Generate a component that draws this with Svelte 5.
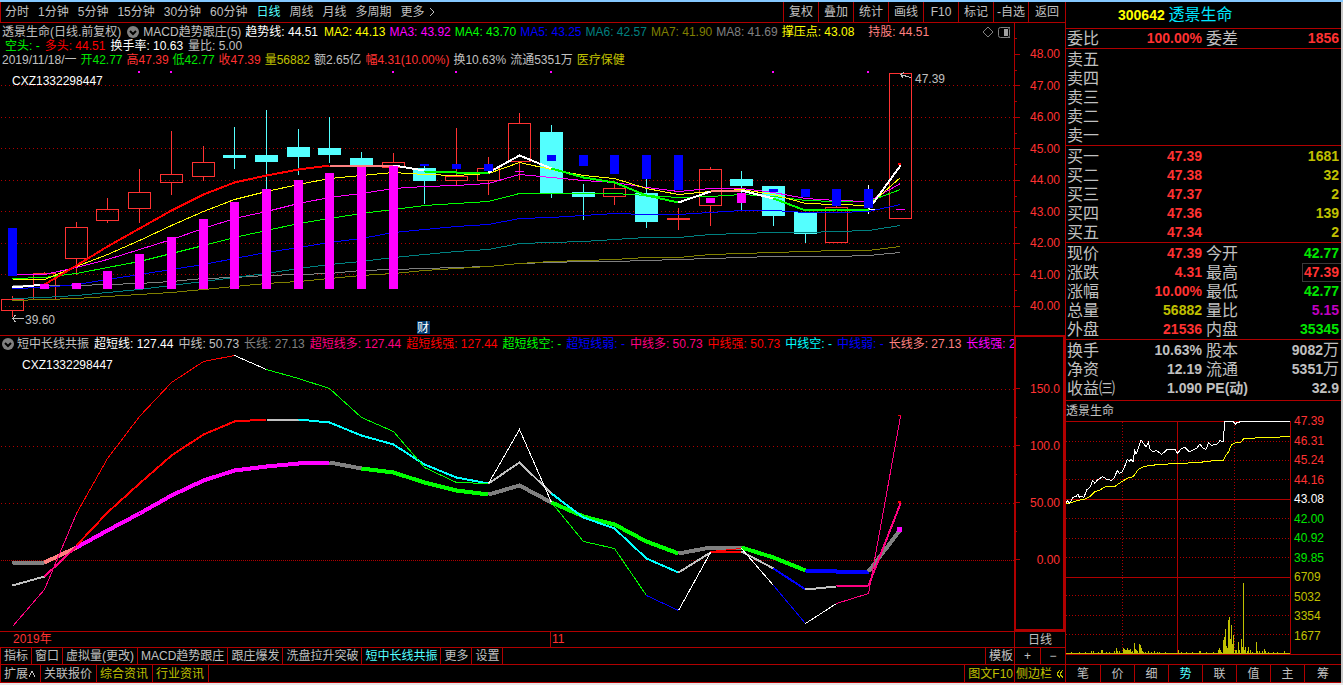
<script lang="ts">
  type Segment = { color: string; from: number; ys: number[] };
  type Cell = { label: string; value: string; tone: string; unit?: string; boxed?: boolean; latin?: boolean };

  const periods = ["分时", "1分钟", "5分钟", "15分钟", "30分钟", "60分钟", "日线", "周线", "月线", "多周期"];
  const tools = ["复权", "叠加", "统计", "画线", "F10", "标记", "-自选", "返回"];

  const averages = [
    { name: "MA2", value: "44.13", color: "#ffff00" },
    { name: "MA3", value: "43.92", color: "#ff00ff" },
    { name: "MA4", value: "43.70", color: "#00ff00" },
    { name: "MA5", value: "43.25", color: "#0000ff" },
    { name: "MA6", value: "42.57", color: "#008080" },
    { name: "MA7", value: "41.90", color: "#808000" },
    { name: "MA8", value: "41.69", color: "#808080" },
    { name: "撑压点", value: "43.08", color: "#ffff00" },
  ];

  const signals = [
    { text: "空头: -", color: "#00ff00" },
    { text: "多头: 44.51", color: "#ff0000" },
    { text: "换手率: 10.63", color: "#ffffff" },
    { text: "量比: 5.00", color: "#c0c0c0" },
  ];

  const dayQuote = [
    { text: "2019/11/18/一", color: "#c0c0c0" },
    { text: "开42.77", color: "#00e600" },
    { text: "高47.39", color: "#ff3232" },
    { text: "低42.77", color: "#00e600" },
    { text: "收47.39", color: "#ff3232" },
    { text: "量56882", color: "#c0c000" },
    { text: "额2.65亿", color: "#c0c0c0" },
    { text: "幅4.31(10.00%)", color: "#ff3232" },
    { text: "换10.63%", color: "#c0c0c0" },
    { text: "流通5351万", color: "#c0c0c0" },
    { text: "医疗保健", color: "#c0c000" },
  ];

  const resonance = [
    { text: "超短线: 127.44", color: "#ffffff" },
    { text: "中线: 50.73", color: "#c0c0c0" },
    { text: "长线: 27.13", color: "#808080" },
    { text: "超短线多: 127.44", color: "#ff0080" },
    { text: "超短线强: 127.44", color: "#ff0000" },
    { text: "超短线空: -", color: "#00ff00" },
    { text: "超短线弱: -", color: "#0000ff" },
    { text: "中线多: 50.73", color: "#ff0080" },
    { text: "中线强: 50.73", color: "#ff0000" },
    { text: "中线空: -", color: "#00ffff" },
    { text: "中线弱: -", color: "#0000ff" },
    { text: "长线多: 27.13", color: "#ff8080" },
    { text: "长线强: 27.13", color: "#ff00ff" },
  ];

  const priceLabels = ["48.00", "47.00", "46.00", "45.00", "44.00", "43.00", "42.00", "41.00", "40.00"];
  const priceGrid = [85, 117, 148, 180, 211, 243, 274, 306];
  const majorTicks = [54, ...priceGrid];
  const minorTicks = [38, 70, 101, 133, 164, 196, 227, 259, 290];

  const oscLabels = ["150.0", "100.0", "50.00", "0.00"];
  const oscGrid = [389, 446, 503];

  // bar index -> pixel column
  const x = (i: number) => Math.floor(12.88 + 31.69 * i);
  const line = (ys: number[], from = 0) => ys.map((y, k) => `${x(from + k) + 0.5},${y + 0.5}`).join(" ");

  // up/down, body top, body bottom, high, low
  const candles: [string, number, number, number, number][] = [
    ["up", 299, 310, 296, 317],
    ["up", 273, 299, 272, 299],
    ["up", 227, 258, 222, 275],
    ["up", 209, 220, 198, 223],
    ["up", 192, 208, 169, 223],
    ["up", 174, 182, 131, 195],
    ["up", 162, 176, 146, 181],
    ["down", 155, 158, 127, 169],
    ["down", 155, 162, 110, 190],
    ["down", 147, 157, 129, 175],
    ["down", 148, 155, 117, 163],
    ["down", 158, 165, 152, 165],
    ["up", 162, 167, 153, 167],
    ["down", 168, 181, 165, 204],
    ["up", 176, 180, 128, 185],
    ["up", 168, 180, 157, 195],
    ["up", 123, 161, 113, 180],
    ["down", 132, 193, 125, 198],
    ["down", 192, 197, 184, 220],
    ["up", 188, 196, 182, 205],
    ["down", 193, 222, 178, 228],
    ["up", 218, 219, 208, 230],
    ["up", 169, 205, 167, 226],
    ["down", 179, 186, 171, 211],
    ["down", 186, 216, 186, 226],
    ["down", 212, 234, 212, 243],
    ["up", 207, 242, 206, 242],
    ["flat", 209, 210, 185, 214],
    ["up", 73, 218, 73, 218],
  ];

  // index, top, bottom, color
  const bars: [number, number, number, string][] = [
    [0, 228, 276, "#0000ff"],
    [1, 284, 289, "#ff00ff"],
    [2, 283, 289, "#ff00ff"],
    [3, 271, 289, "#ff00ff"],
    [4, 254, 289, "#ff00ff"],
    [5, 237, 289, "#ff00ff"],
    [6, 219, 289, "#ff00ff"],
    [7, 202, 289, "#ff00ff"],
    [8, 189, 289, "#ff00ff"],
    [9, 180, 289, "#ff00ff"],
    [10, 173, 289, "#ff00ff"],
    [11, 167, 289, "#ff00ff"],
    [12, 166, 289, "#ff00ff"],
    [13, 164, 166, "#0000ff"],
    [14, 164, 169, "#0000ff"],
    [15, 164, 171, "#0000ff"],
    [16, 171, 172, "#ff00ff"],
    [17, 155, 161, "#0000ff"],
    [18, 155, 166, "#0000ff"],
    [19, 155, 174, "#0000ff"],
    [20, 155, 179, "#0000ff"],
    [21, 155, 190, "#0000ff"],
    [22, 198, 203, "#ff00ff"],
    [23, 193, 203, "#ff00ff"],
    [24, 189, 192, "#0000ff"],
    [25, 189, 197, "#0000ff"],
    [26, 189, 206, "#0000ff"],
    [27, 189, 208, "#0000ff"],
    [28, 209, 210, "#ff00ff"],
  ];

  const maLines: Segment[] = [
    { color: "#808080", from: 0, ys: [285, 285, 285, 284, 283, 281, 278, 277, 275, 274, 273, 270, 269, 268, 267, 266, 263, 262, 261, 261, 260, 259, 258, 257, 256, 256, 256, 255, 252] },
    { color: "#808000", from: 0, ys: [300, 299, 298, 296, 294, 292, 289, 286, 283, 281, 278, 275, 273, 270, 268, 266, 263, 261, 260, 259, 257, 257, 254, 253, 252, 251, 250, 250, 246] },
    { color: "#008080", from: 0, ys: [298, 297, 295, 292, 289, 285, 281, 277, 273, 268, 264, 261, 257, 254, 251, 249, 243, 242, 241, 239, 237, 237, 234, 233, 232, 232, 231, 230, 225] },
    { color: "#0000ff", from: 0, ys: [288, 287, 284, 279, 274, 269, 264, 258, 252, 247, 242, 238, 232, 229, 226, 224, 218, 217, 215, 213, 214, 214, 212, 210, 210, 212, 212, 211, 204] },
    { color: "#00ff00", from: 0, ys: [278, 277, 273, 267, 261, 253, 245, 237, 230, 223, 218, 213, 209, 205, 203, 201, 193, 193, 193, 193, 195, 197, 196, 194, 196, 200, 201, 201, 189] },
    { color: "#ff00ff", from: 0, ys: [274, 274, 267, 259, 249, 239, 228, 218, 211, 203, 197, 193, 188, 186, 185, 183, 174, 177, 180, 182, 187, 191, 188, 188, 192, 198, 200, 201, 183] },
    { color: "#ffff00", from: 0, ys: [279, 279, 266, 254, 240, 225, 211, 199, 191, 184, 178, 175, 172, 174, 175, 173, 162, 169, 175, 178, 188, 194, 191, 189, 194, 203, 204, 205, 177] },
  ];

  const trend: Segment[] = [
    { color: "#ffffff", from: 0, ys: [287, 284] },
    { color: "#ff0000", from: 1, ys: [284, 265, 246, 228, 210, 194, 182, 175, 169, 165] },
    { color: "#ff8080", from: 10, ys: [165, 165, 165] },
    { color: "#ffffff", from: 12, ys: [165, 170] },
    { color: "#00ff00", from: 13, ys: [171, 172, 172] },
    { color: "#ffffff", from: 15, ys: [172, 155, 168] },
    { color: "#00ff00", from: 17, ys: [168, 177, 182, 195, 202] },
    { color: "#ffffff", from: 21, ys: [202, 191] },
    { color: "#ff8080", from: 22, ys: [190, 190] },
    { color: "#ffffff", from: 23, ys: [190, 198] },
    { color: "#00ff00", from: 24, ys: [198, 210, 209, 209] },
    { color: "#ffffff", from: 27, ys: [209, 165] },
  ];

  const alertDots = [4, 5, 12, 14, 17, 24, 27];

  const longLine: Segment[] = [
    { color: "#808080", from: 0, ys: [563, 562] },
    { color: "#ff8080", from: 1, ys: [562, 547] },
    { color: "#ff00ff", from: 2, ys: [547, 530, 513, 495, 480, 470, 466, 463, 462] },
    { color: "#808080", from: 10, ys: [462, 468] },
    { color: "#00ff00", from: 11, ys: [468, 472, 482, 490, 494] },
    { color: "#808080", from: 15, ys: [494, 485, 502] },
    { color: "#00ff00", from: 17, ys: [502, 516, 524, 541, 553] },
    { color: "#808080", from: 21, ys: [553, 547, 547] },
    { color: "#00ff00", from: 23, ys: [547, 557, 570] },
    { color: "#0000ff", from: 25, ys: [570, 571, 571] },
    { color: "#808080", from: 27, ys: [571, 529] },
  ];

  const midLine: Segment[] = [
    { color: "#c0c0c0", from: 0, ys: [585, 576] },
    { color: "#ff0080", from: 1, ys: [576, 546] },
    { color: "#ff0000", from: 2, ys: [545, 512, 483, 455, 434, 421, 419] },
    { color: "#c0c0c0", from: 8, ys: [419, 419] },
    { color: "#00ffff", from: 9, ys: [419, 422, 435, 444, 464, 477, 483] },
    { color: "#c0c0c0", from: 15, ys: [483, 462, 493] },
    { color: "#00ffff", from: 17, ys: [493, 517, 528, 558, 572] },
    { color: "#c0c0c0", from: 21, ys: [572, 552] },
    { color: "#ff0000", from: 22, ys: [552, 551] },
    { color: "#c0c0c0", from: 23, ys: [551, 568] },
    { color: "#0000ff", from: 24, ys: [568, 589] },
    { color: "#c0c0c0", from: 25, ys: [589, 586] },
    { color: "#ff0080", from: 26, ys: [586, 585, 503] },
  ];

  const shortLine: Segment[] = [
    { color: "#ff0080", from: 0, ys: [626, 589, 513] },
    { color: "#ff0000", from: 2, ys: [513, 458, 416, 382, 361, 355] },
    { color: "#ffffff", from: 7, ys: [355, 369] },
    { color: "#00ff00", from: 8, ys: [369, 378, 388, 417, 431, 467, 482, 483] },
    { color: "#ffffff", from: 15, ys: [483, 429, 502] },
    { color: "#00ff00", from: 17, ys: [502, 541, 548, 595] },
    { color: "#0000ff", from: 20, ys: [595, 610] },
    { color: "#ffffff", from: 21, ys: [610, 552] },
    { color: "#ff0000", from: 22, ys: [551, 548] },
    { color: "#ffffff", from: 23, ys: [548, 585] },
    { color: "#0000ff", from: 24, ys: [585, 623] },
    { color: "#ffffff", from: 25, ys: [623, 603] },
    { color: "#ff0080", from: 26, ys: [603, 593, 416] },
  ];

  const indicatorTabs = ["指标", "窗口", "虚拟量(更改)", "MACD趋势跟庄", "跟庄爆发", "洗盘拉升突破", "短中长线共振", "更多", "设置"];
  const infoTabs = [
    { text: "关联报价", accent: false },
    { text: "综合资讯", accent: true },
    { text: "行业资讯", accent: true },
  ];

  const asks = ["卖五", "卖四", "卖三", "卖二", "卖一"];
  const bids = [
    { label: "买一", price: "47.39", volume: "1681" },
    { label: "买二", price: "47.38", volume: "32" },
    { label: "买三", price: "47.37", volume: "2" },
    { label: "买四", price: "47.36", volume: "139" },
    { label: "买五", price: "47.34", volume: "2" },
  ];

  const ratio: [Cell, Cell][] = [
    [{ label: "委比", value: "100.00%", tone: "up" }, { label: "委差", value: "1856", tone: "up" }],
  ];
  const stats: [Cell, Cell][] = [
    [{ label: "现价", value: "47.39", tone: "up" }, { label: "今开", value: "42.77", tone: "down" }],
    [{ label: "涨跌", value: "4.31", tone: "up" }, { label: "最高", value: "47.39", tone: "up", boxed: true }],
    [{ label: "涨幅", value: "10.00%", tone: "up" }, { label: "最低", value: "42.77", tone: "down" }],
    [{ label: "总量", value: "56882", tone: "volume" }, { label: "量比", value: "5.15", tone: "ratio" }],
    [{ label: "外盘", value: "21536", tone: "up" }, { label: "内盘", value: "35345", tone: "down" }],
  ];
  const fundamentals: [Cell, Cell][] = [
    [{ label: "换手", value: "10.63%", tone: "plain" }, { label: "股本", value: "9082", unit: "万", tone: "plain" }],
    [{ label: "净资", value: "12.19", tone: "plain" }, { label: "流通", value: "5351", unit: "万", tone: "plain" }],
    [{ label: "收益㈢", value: "1.090", tone: "plain" }, { label: "PE(动)", value: "32.9", tone: "plain", latin: true }],
  ];

  const miniLabels = [
    { text: "47.39", tone: "up" },
    { text: "46.31", tone: "up" },
    { text: "45.24", tone: "up" },
    { text: "44.16", tone: "up" },
    { text: "43.08", tone: "base" },
    { text: "42.00", tone: "down" },
    { text: "40.92", tone: "down" },
    { text: "39.85", tone: "down" },
    { text: "6709", tone: "volume" },
    { text: "5032", tone: "volume" },
    { text: "3354", tone: "volume" },
    { text: "1677", tone: "volume" },
  ];
  const miniDotted = [124, 181, 238, 355, 415, 472, 586, 646, 703];
  const miniPrice =
    "18,310 22,302 28,309 33,303 38,292 48,290 54,282 58,292 63,288 72,292 80,270 90,262 98,242 105,250 112,240 128,230 140,238 155,241 163,232 172,212 178,220 186,216 192,205 202,178 208,185 212,178 220,185 224,148 228,163 234,148 243,119 250,130 258,140 265,128 270,148 278,155 290,152 305,163 320,150 345,148 352,160 365,145 375,143 388,155 400,150 410,145 420,132 427,143 438,148 446,128 455,136 472,132 480,122 490,125 494,65 520,65 526,73 532,67 537,68 540,65 690,65";
  const miniAverage =
    "18,310 35,308 50,302 75,297 90,290 105,275 120,270 138,259 165,259 185,245 205,233 220,230 235,208 250,200 270,196 325,192 350,190 420,188 435,184 490,181 498,165 506,155 514,135 525,129 542,127 552,115 585,114 605,111 660,111 690,109";
  const miniVolume: [number, number][] = [
    [33, 756], [57, 756], [75, 756], [93, 752], [99, 754], [114, 755], [123, 751], [126, 749], [138, 755], [147, 755],
    [162, 752], [168, 744], [171, 752], [177, 752], [189, 744], [192, 747], [195, 750], [198, 750], [201, 744], [204, 751],
    [207, 750], [210, 747], [213, 755], [216, 753], [222, 729], [225, 747], [228, 750], [231, 752], [237, 732], [240, 736],
    [243, 745], [246, 753], [249, 755], [255, 756], [264, 753], [273, 755], [282, 753], [291, 755], [297, 756], [315, 756],
    [354, 749], [363, 756], [378, 756], [396, 756], [417, 752], [420, 754], [438, 756], [459, 757], [474, 749], [477, 744],
    [480, 750], [483, 755], [489, 720], [492, 710], [495, 687], [498, 738], [501, 743], [504, 660], [507, 651], [510, 716],
    [513, 675], [516, 733], [519, 705], [525, 750], [528, 751], [534, 726], [537, 750], [543, 717], [546, 740], [549, 548],
    [552, 750], [555, 742], [561, 752], [564, 741], [570, 750], [576, 756], [588, 726], [591, 752], [597, 753], [606, 754],
    [612, 747], [615, 753], [624, 755], [639, 757], [651, 757], [672, 753],
  ];

  const sideTabs = ["笔", "价", "细", "势", "联", "值", "主", "筹"];

  let period = "日线";
  let indicator = "短中长线共振";
  let sideTab = "势";
</script>

<div class="terminal">
  <div class="workspace">
    <main class="charts">
      <header class="toolbar">
        <nav class="periods" aria-label="周期">
          {#each periods as name}
            <button class:active={period === name} on:click={() => (period = name)}>{name}</button>
          {/each}
          <button class="more">更多
            <svg width="6" height="10" aria-hidden="true"><path d="M1 1 L5 5 L1 9" fill="none" stroke="currentColor" /></svg>
          </button>
        </nav>
        <div class="tools">
          {#each tools as tool}
            <button>{tool}</button>
          {/each}
        </div>
      </header>

      <section class="pane pane-main">
        <div class="plot">
          <div class="readout">
            <div class="readout-row title-row">
              <span class="silver">透景生命(日线.前复权)</span>
              <svg class="toggle" width="12" height="12" aria-hidden="true">
                <circle cx="6" cy="6" r="6" fill="#808080" />
                <path d="M3 5 L6 8 L9 5" fill="none" stroke="#000" stroke-width="2" />
              </svg>
              <span class="silver macd">MACD趋势跟庄(5)</span>
              <span class="white">趋势线: 44.51</span>
              <div class="averages">
                {#each averages as ma}
                  <span style="color: {ma.color}">{ma.name}: {ma.value}</span>
                {/each}
              </div>
              <span class="hold">持股: 44.51</span>
              <svg class="pane-icons" width="28" height="14" aria-hidden="true">
                <path d="M6 2 L11 7 L6 12 L1 7 Z" fill="none" stroke="#808080" />
                <rect x="19.5" y="2.5" width="11" height="10" rx="1" fill="none" stroke="#808080" />
                <rect x="16.5" y="2.5" width="11" height="10" rx="2" fill="#000" stroke="#808080" />
                <rect x="22" y="4" width="4" height="7" fill="#a0a0a0" />
              </svg>
            </div>
            <div class="readout-row signals">
              {#each signals as s}
                <span style="color: {s.color}">{s.text}</span>
              {/each}
            </div>
            <div class="readout-row day">
              {#each dayQuote as q}
                <span style="color: {q.color}">{q.text}</span>
              {/each}
            </div>
          </div>

          <svg class="canvas" width="100%" height="268" role="img" aria-label="日线K线图">
            <g transform="translate(0 -67)">
              {#each priceGrid as y}
                <line class="grid" x1="1" x2="100%" y1={y + 0.5} y2={y + 0.5} />
              {/each}

              {#each alertDots as i}
                <rect x={x(i) - 1} y="71" width="2" height="2" fill="#ff00ff" />
              {/each}

              {#each candles as [kind, top, bottom, high, low], i}
                {#if kind === "up"}
                  <rect x={x(i)} y={high} width="1" height={top - high} fill="#ff3232" />
                  <rect x={x(i)} y={bottom} width="1" height={low - bottom} fill="#ff3232" />
                  <rect x={x(i) - 10.5} y={top + 0.5} width="22" height={bottom - top} fill="none" stroke="#ff3232" />
                {:else}
                  <rect x={x(i)} y={high} width="1" height={low - high} fill={kind === "down" ? "#54ffff" : "#ffffff"} />
                  <rect x={x(i) - 11} y={top} width="23" height={bottom - top} fill={kind === "down" ? "#54ffff" : "#ffffff"} />
                {/if}
              {/each}

              {#each maLines as ma}
                <polyline points={line(ma.ys)} fill="none" stroke={ma.color} />
              {/each}
              {#each trend as seg}
                <polyline points={line(seg.ys, seg.from)} fill="none" stroke={seg.color} stroke-width="2" />
              {/each}
              {#each bars as [i, top, bottom, color]}
                <rect x={x(i) - 4} y={top} width="9" height={bottom - top} fill={color} />
              {/each}
              <rect x={x(28) - 2} y="163" width="3" height="2" fill="#ff0000" />

              <path d="M12 318.5 H24 M15.5 315 L12.5 318.5 L15.5 322" fill="none" stroke="#c0c0c0" />
              <text x="25" y="324">39.60</text>
              <path d="M900 74.5 L911 77.5 M904 72.5 L900.5 74.5 L903 78" fill="none" stroke="#c0c0c0" />
              <text x="915" y="83">47.39</text>
              <text class="mark" x="12" y="85">CXZ1332298447</text>

              <rect x="417" y="321" width="13" height="13" fill="#003a70" />
              <text class="mark" x="417" y="332">财</text>
            </g>
          </svg>
        </div>
        <div class="axis">
          <svg width="5" height="312" aria-hidden="true">
            <g transform="translate(0 -23)" fill="#b00000">
              {#each majorTicks as y}
                <rect x="0" {y} width="5" height="1" />
              {/each}
              {#each minorTicks as y}
                <rect x="0" {y} width="2" height="1" />
              {/each}
            </g>
          </svg>
          <div class="axis-labels price-labels">
            {#each priceLabels as label}
              <span>{label}</span>
            {/each}
          </div>
        </div>
      </section>

      <section class="pane pane-sub">
        <div class="plot">
          <div class="readout-row resonance">
            <svg class="toggle" width="12" height="12" aria-hidden="true">
              <circle cx="6" cy="6" r="6" fill="#808080" />
              <path d="M3 5 L6 8 L9 5" fill="none" stroke="#000" stroke-width="2" />
            </svg>
            <span class="silver">短中长线共振</span>
            {#each resonance as r}
              <span style="color: {r.color}">{r.text}</span>
            {/each}
          </div>
          <svg class="canvas fill" width="100%" role="img" aria-label="短中长线共振">
            <g transform="translate(0 -352)">
              {#each oscGrid as y}
                <line class="grid" x1="1" x2="100%" y1={y + 0.5} y2={y + 0.5} />
              {/each}
              <line class="grid zero" x1="1" x2="100%" y1="560.5" y2="560.5" />

              {#each longLine as seg}
                <polyline points={line(seg.ys, seg.from)} fill="none" stroke={seg.color} stroke-width="4" />
              {/each}
              {#each midLine as seg}
                <polyline points={line(seg.ys, seg.from)} fill="none" stroke={seg.color} stroke-width="2" />
              {/each}
              {#each shortLine as seg}
                <polyline points={line(seg.ys, seg.from)} fill="none" stroke={seg.color} />
              {/each}
              <rect x={x(28) - 3} y="527" width="5" height="5" fill="#ff00ff" />
              <rect x={x(28) - 2} y="501" width="3" height="2" fill="#ff0000" />
              <rect x={x(28) - 2} y="415" width="3" height="1" fill="#ff0000" />
              <text class="mark" x="22" y="369">CXZ1332298447</text>
            </g>
          </svg>
        </div>
        <div class="axis framed">
          <svg width="4" height="291" aria-hidden="true">
            <g transform="translate(0 -338)" fill="#b00000">
              {#each [...oscGrid, 560] as y}
                <rect x="0" {y} width="4" height="1" />
              {/each}
              {#each [418, 475, 532] as y}
                <rect x="0" {y} width="1" height="1" />
              {/each}
            </g>
          </svg>
          <div class="axis-labels osc-labels">
            {#each oscLabels as label}
              <span>{label}</span>
            {/each}
          </div>
        </div>
      </section>

      <div class="bar dates">
        <div class="bar-main">
          <span class="year">2019年</span>
          <span class="month">11</span>
        </div>
        <button class="corner">日线</button>
      </div>

      <div class="bar tabs">
        <nav class="bar-main" aria-label="指标">
          {#each indicatorTabs as name}
            <button class="tab" class:active={indicator === name} on:click={() => (indicator = name)}>{name}</button>
          {/each}
          <span class="tab rest"></span>
          <button class="tab template">模板</button>
        </nav>
        <div class="corner zoom">
          <button aria-label="放大">+</button>
          <button aria-label="缩小">−</button>
        </div>
      </div>

      <div class="bar info">
        <nav class="bar-main" aria-label="资讯">
          <button class="tab wide">扩展<svg width="8" height="8" aria-hidden="true"><path d="M1 7 L4 1 L7 7" fill="none" stroke="currentColor" /></svg></button>
          {#each infoTabs as tab}
            <button class="tab wide" class:accent={tab.accent}>{tab.text}</button>
          {/each}
          <span class="tab rest"></span>
          <button class="tab accent template">图文F10</button>
        </nav>
        <button class="corner accent sidebar">侧边栏
          <svg width="8" height="10" aria-hidden="true"><path d="M4 1 L1 5 L4 9 M7 1 L4 5 L7 9" fill="none" stroke="currentColor" /></svg>
        </button>
      </div>
    </main>

    <aside class="side">
      <h1><span class="code">300642</span> <span class="name">透景生命</span></h1>

      {#snippet pairs(rows: [Cell, Cell][])}
        <tbody>
          {#each rows as row}
            <tr>
              {#each row as cell, k}
                <th class:second={k === 1} class:latin={cell.latin} scope="row">{cell.label}</th>
                <td class={cell.tone} class:boxed={cell.boxed}>{cell.value}{#if cell.unit}<span class="unit">{cell.unit}</span>{/if}</td>
              {/each}
            </tr>
          {/each}
        </tbody>
      {/snippet}

      {#snippet columns()}
        <colgroup><col class="c1" /><col class="c2" /><col class="c3" /><col /></colgroup>
      {/snippet}

      <table class="tight">{@render columns()}{@render pairs(ratio)}</table>
      <table>
        {@render columns()}
        <tbody>
          {#each asks as ask}
            <tr><th scope="row">{ask}</th><td></td><td></td><td></td></tr>
          {/each}
        </tbody>
      </table>
      <table>
        {@render columns()}
        <tbody>
          {#each bids as bid}
            <tr>
              <th scope="row">{bid.label}</th>
              <td class="up">{bid.price}</td>
              <td class="volume" colspan="2">{bid.volume}</td>
            </tr>
          {/each}
        </tbody>
      </table>
      <table>{@render columns()}{@render pairs(stats)}</table>
      <table class="last">{@render columns()}{@render pairs(fundamentals)}</table>

      <section class="mini">
        <h2>透景生命</h2>
        <svg class="mini-chart" viewBox="18 60 675 702" preserveAspectRatio="none" role="img" aria-label="分时走势">
          {#each miniDotted as y}
            <line class="dotted" x1="18" x2="690" y1={y + 0.5} y2={y + 0.5} />
          {/each}
          <line class="dotted" x1="187.5" x2="187.5" y1="66" y2="762" />
          <line class="dotted" x1="523.5" x2="523.5" y1="66" y2="762" />
          <path class="solid" d="M18 64.5 H691.5 V762 M18 298.5 H691 M18 532.5 H691 M352.5 64 V762" />
          {#each miniVolume as [vx, top]}
            <rect x={vx} y={top} width="3" height={762 - top} fill="#c0c000" />
          {/each}
          <rect x="18" y="759" width="672" height="3" fill="#c0c000" />
          <polyline points={miniAverage} stroke="#ffff00" />
          <polyline points={miniPrice} stroke="#ffffff" />
        </svg>
        <div class="mini-labels">
          {#each miniLabels as label}
            <span class={label.tone}>{label.text}</span>
          {/each}
        </div>
      </section>

      <nav class="side-tabs" aria-label="侧栏">
        {#each sideTabs as name}
          <button class:active={sideTab === name} on:click={() => (sideTab = name)}>{name}</button>
        {/each}
      </nav>
    </aside>
  </div>
</div>

<style>
  :global(body) {
    background: #000;
  }

  .terminal {
    --line: #b00000;
    --silver: #c0c0c0;
    --red: #ff3232;
    --green: #00e600;
    --olive: #c0c000;
    --cyan: #54ffff;
    box-sizing: border-box;
    min-height: 100vh;
    display: flex;
    flex-direction: column;
    border-top: 2px solid #84c8ff;
    border-bottom: 2px solid #e8e8e8;
    background: #000;
    color: var(--silver);
    font: 12px/14px "Liberation Sans", "Noto Sans CJK SC", sans-serif;
    overflow: hidden;
  }

  .terminal :is(div, span, table, nav, section, button) {
    box-sizing: border-box;
  }

  button {
    margin: 0;
    padding: 0;
    border: none;
    background: none;
    color: inherit;
    font: inherit;
    white-space: nowrap;
    cursor: pointer;
  }

  svg {
    display: block;
    flex: none;
    shape-rendering: crispEdges;
  }

  .workspace {
    flex: 1;
    display: grid;
    grid-template-columns: minmax(0, 1fr) 278px;
  }

  .charts {
    display: flex;
    flex-direction: column;
    min-width: 0;
  }

  /* toolbar */
  .toolbar {
    display: flex;
    justify-content: space-between;
    height: 20px;
    border-left: 1px solid var(--line);
    border-bottom: 1px solid var(--line);
  }

  .periods {
    display: flex;
    align-items: center;
    gap: 9px;
    padding-left: 4px;
  }

  .more {
    display: flex;
    align-items: center;
    gap: 4px;
  }

  .active {
    color: var(--cyan);
  }

  .tools {
    display: flex;
  }

  .tools button {
    width: 35px;
    border-left: 1px solid var(--line);
  }

  .tools button:last-child {
    width: 37px;
  }

  /* chart panes */
  .pane {
    display: grid;
    grid-template-columns: minmax(0, 1fr) 51px;
  }

  .pane-main {
    border-bottom: 1px solid var(--line);
  }

  .pane-sub {
    flex: 1;
    min-height: 295px;
  }

  .plot {
    display: flex;
    flex-direction: column;
    min-width: 0;
    overflow: hidden;
  }

  .readout {
    height: 44px;
    padding-top: 2px;
  }

  .readout-row {
    display: flex;
    align-items: center;
    white-space: nowrap;
    height: 14px;
  }

  .title-row {
    padding-left: 2px;
  }

  .title-row .toggle {
    margin: 0 4px 0 6px;
  }

  .toggle {
    shape-rendering: auto;
  }

  .macd {
    margin-right: 4px;
  }

  .averages {
    display: flex;
    gap: 4px;
    margin-left: 6px;
  }

  .hold {
    margin-left: 14px;
    color: #ff8080;
  }

  .pane-icons {
    margin: 0 4px 0 auto;
    shape-rendering: auto;
  }

  .silver {
    color: var(--silver);
  }

  .white {
    color: #fff;
  }

  .signals {
    gap: 5px;
    padding-left: 5px;
  }

  .day {
    gap: 4px;
    padding-left: 2px;
  }

  .resonance {
    flex: none;
    gap: 5px;
    height: 16px;
    padding-left: 2px;
  }

  .resonance .toggle {
    margin-right: -2px;
  }

  .canvas.fill {
    flex: 1;
  }

  .canvas text {
    fill: var(--silver);
  }

  .canvas .mark {
    fill: #fff;
  }

  .grid {
    stroke: var(--line);
    stroke-dasharray: 1 3;
  }

  .zero {
    stroke-dasharray: 1 1;
  }

  .axis {
    display: flex;
    border-left: 1px solid var(--line);
    color: var(--red);
  }

  .axis.framed {
    border: 2px solid var(--line);
    border-top-width: 1px;
  }

  .axis-labels {
    flex: 1;
    display: flex;
    flex-direction: column;
    text-align: right;
    line-height: 13px;
  }

  .price-labels {
    justify-content: space-between;
    height: 265px;
    margin-top: 25px;
    padding-right: 5px;
  }

  .osc-labels {
    gap: 44px;
    padding: 46px 3px 0 0;
  }

  /* rows under the charts */
  .bar {
    display: grid;
    grid-template-columns: minmax(0, 1fr) 51px;
    border-bottom: 1px solid var(--line);
  }

  .bar-main {
    display: flex;
    min-width: 0;
  }

  .dates {
    height: 17px;
    border-top: 1px solid var(--line);
    color: var(--red);
  }

  .year {
    width: 550px;
    padding-left: 13px;
  }

  .month {
    padding-left: 1px;
    border-left: 1px solid var(--line);
  }

  .corner {
    border-left: 1px solid var(--line);
    color: var(--silver);
  }

  .tabs {
    height: 17px;
  }

  .info {
    height: 18px;
  }

  .tab {
    flex: none;
    padding: 0 3px;
    border-left: 1px solid var(--line);
  }

  .wide {
    display: flex;
    align-items: center;
    padding-right: 4px;
  }

  .rest {
    flex: 1;
  }

  .template {
    padding: 0 1px 0 3px;
  }

  .accent {
    color: var(--olive);
  }

  .zoom {
    display: grid;
    grid-template-columns: 1fr 1fr;
  }

  .zoom button + button {
    border-left: 1px solid var(--line);
  }

  .sidebar {
    display: flex;
    align-items: center;
    gap: 4px;
    padding-left: 1px;
  }

  /* quote column */
  .side {
    display: flex;
    flex-direction: column;
    border-left: 1px solid var(--line);
    border-right: 2px solid #c8c8c8;
  }

  h1 {
    height: 26px;
    margin: 0;
    padding-left: 52px;
    border-bottom: 1px solid var(--line);
    font-size: 14px;
    line-height: 26px;
  }

  .code {
    color: #ffff00;
  }

  .name {
    color: #00e6ff;
    font-size: 16px;
    font-weight: normal;
  }

  table {
    width: 100%;
    table-layout: fixed;
    border-collapse: separate;
    border-spacing: 0;
    border-bottom: 1px solid var(--line);
    padding-top: 1px;
  }

  table.tight {
    padding-top: 0;
  }

  table.last {
    padding-bottom: 2px;
  }

  .c1 {
    width: 50px;
  }

  .c2 {
    width: 86px;
  }

  .c3 {
    width: 50px;
  }

  th,
  td {
    height: 19px;
    padding: 0;
    line-height: 19px;
    white-space: nowrap;
  }

  th {
    padding-left: 1px;
    font-size: 16px;
    font-weight: normal;
    text-align: left;
  }

  th.second {
    padding-left: 4px;
  }

  th.latin {
    font-size: 14px;
    font-weight: bold;
  }

  td {
    font-size: 14px;
    font-weight: bold;
    text-align: right;
  }

  td:last-child {
    padding-right: 2px;
  }

  .unit {
    font-size: 16px;
    font-weight: normal;
    line-height: 1px;
  }

  .boxed {
    background: linear-gradient(#383838, #383838) right top / 38px 1px no-repeat,
      linear-gradient(#383838, #383838) right bottom / 38px 1px no-repeat,
      linear-gradient(#383838, #383838) right 38px top / 1px 19px no-repeat;
  }

  .up {
    color: var(--red);
  }

  .down {
    color: var(--green);
  }

  .volume {
    color: var(--olive);
  }

  .ratio {
    color: #c000c0;
  }

  .base {
    color: #fff;
  }

  .mini {
    display: grid;
    grid-template-columns: 225px 1fr;
    grid-template-rows: 19px 234px;
    border-bottom: 1px solid var(--line);
  }

  h2 {
    margin: 0;
    font-size: 12px;
    font-weight: normal;
    line-height: 20px;
  }

  .mini-chart {
    grid-row: 2;
    width: 100%;
    height: 234px;
  }

  .mini-chart :is(line, polyline, path) {
    fill: none;
    vector-effect: non-scaling-stroke;
  }

  .dotted {
    stroke: var(--line);
    stroke-dasharray: 1 2;
  }

  .solid {
    stroke: var(--line);
  }

  .mini-labels {
    grid-column: 2;
    grid-row: 1 / 3;
    display: flex;
    flex-direction: column;
    justify-content: space-between;
    padding: 14px 0 11px 3px;
    line-height: 13px;
  }

  .side-tabs {
    display: grid;
    grid-template-columns: repeat(7, 34px) 1fr;
    height: 19px;
    margin-top: auto;
    border-top: 1px solid var(--line);
    border-bottom: 1px solid var(--line);
  }

  .side-tabs button + button {
    border-left: 1px solid var(--line);
  }
</style>
